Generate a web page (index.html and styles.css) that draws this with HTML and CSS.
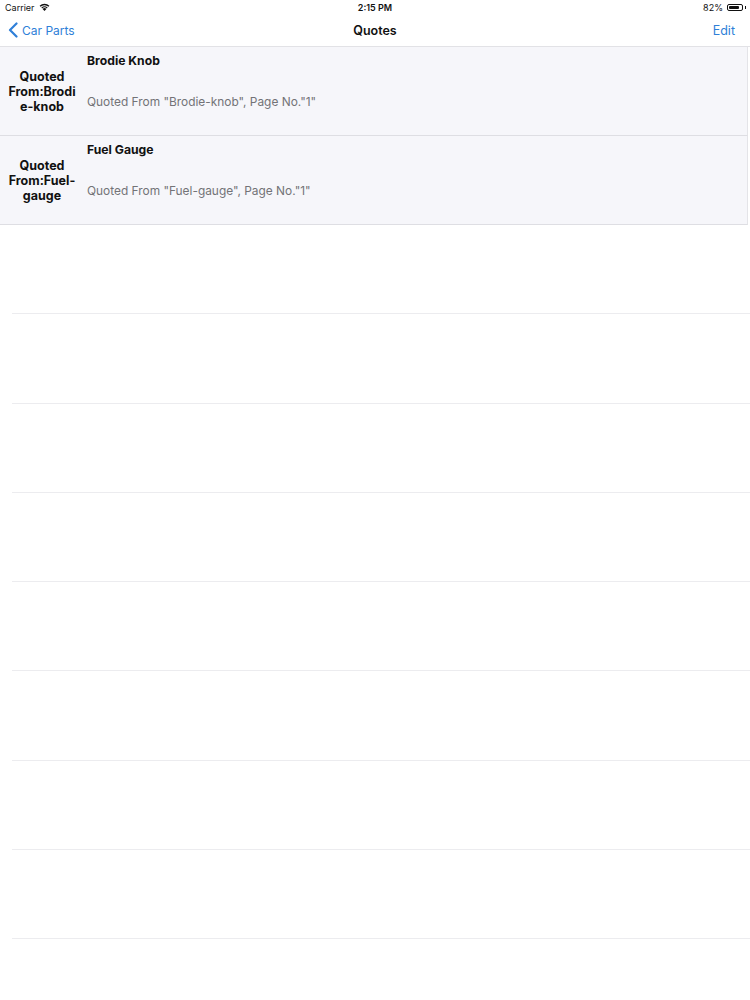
FILE: index.html
```html
<!DOCTYPE html>
<html>
<head>
<meta charset="utf-8">
<link rel="stylesheet" href="styles.css">
</head>
<body>
<div class="status">
  <div class="st-left">Carrier
    <svg class="wifi" width="11" height="8" viewBox="0 0 11 8"><path d="M5.5 8 L3.6 5.9 A2.8 2.8 0 0 1 7.4 5.9 Z" fill="#111"/><path d="M2.4 4.6 A4.5 4.5 0 0 1 8.6 4.6 L7.9 5.4 A3.5 3.5 0 0 0 3.1 5.4 Z" fill="#111"/><path d="M0.6 2.8 A7 7 0 0 1 10.4 2.8 L9.5 3.8 A5.8 5.8 0 0 0 1.5 3.8 Z" fill="#111"/></svg>
  </div>
  <div class="st-center">2:15 PM</div>
  <div class="st-right">82%
    <span class="battery"><span class="bat-fill"></span></span><span class="bat-tip"></span>
  </div>
</div>
<div class="nav">
  <div class="nav-left">
    <svg width="10" height="16" viewBox="0 0 10 16"><path d="M8.5 1.5 L2 8 L8.5 14.5" fill="none" stroke="#2f7fd8" stroke-width="2.2" stroke-linecap="round" stroke-linejoin="round"/></svg>
    <span>Car Parts</span>
  </div>
  <div class="nav-title">Quotes</div>
  <div class="nav-right">Edit</div>
</div>
<div class="list">
  <div class="cell">
    <div class="cell-label">Quoted From:Brodie-knob</div>
    <div class="cell-body">
      <div class="cell-title">Brodie Knob</div>
      <div class="cell-sub">Quoted From "Brodie-knob", Page No."1"</div>
    </div>
  </div>
  <div class="cell">
    <div class="cell-label">Quoted From:Fuel-gauge</div>
    <div class="cell-body">
      <div class="cell-title">Fuel Gauge</div>
      <div class="cell-sub">Quoted From "Fuel-gauge", Page No."1"</div>
    </div>
  </div>
  <div class="empty"></div>
  <div class="empty"></div>
  <div class="empty"></div>
  <div class="empty"></div>
  <div class="empty"></div>
  <div class="empty"></div>
  <div class="empty"></div>
  <div class="empty"></div>
</div>
</body>
</html>
```
FILE: styles.css
```css
html, body {
  margin: 0;
  padding: 0;
  background: #ffffff;
  font-family: Inter, "Liberation Sans", Arial, sans-serif;
  color: #111;
}
.status {
  height: 14px;
  display: flex;
  align-items: center;
  justify-content: space-between;
  padding: 0 4px 0 5px;
  font-size: 9px;
  position: relative;
}
.st-left {
  display: flex;
  align-items: center;
  gap: 4px;
}
.st-center {
  position: absolute;
  left: 0;
  right: 0;
  text-align: center;
  font-weight: 600;
  pointer-events: none;
}
.st-right {
  display: flex;
  align-items: center;
  gap: 2px;
}
.battery {
  display: inline-block;
  width: 16px;
  height: 7px;
  border: 1px solid #111;
  border-radius: 2px;
  padding: 1px;
  box-sizing: border-box;
  margin-left: 2px;
}
.bat-fill {
  display: block;
  width: 82%;
  height: 100%;
  background: #111;
  border-radius: 1px;
}
.bat-tip {
  display: inline-block;
  width: 1px;
  height: 3px;
  background: #111;
}
.nav {
  height: 32px;
  display: flex;
  align-items: center;
  justify-content: space-between;
  padding: 0 15px 0 8px;
  border-bottom: 1px solid #e2e2e6;
  position: relative;
  font-size: 12.5px;
}
.nav-left {
  display: flex;
  align-items: center;
  gap: 4px;
  color: #2f7fd8;
  font-size: 12px;
}
.nav-title {
  position: absolute;
  left: 0;
  right: 0;
  text-align: center;
  font-weight: 600;
  pointer-events: none;
}
.nav-right {
  color: #2f7fd8;
}
.cell {
  height: 88px;
  display: flex;
  background: #f6f6fa;
  border-bottom: 1px solid #dedee3;
  border-right: 1px solid #e4e4e8;
  margin-right: 2px;
}
.cell-label {
  width: 72px;
  margin-left: 6px;
  align-self: center;
  text-align: center;
  font-weight: 700;
  font-size: 12.5px;
  line-height: 15px;
  overflow-wrap: anywhere;
}
.cell-body {
  margin-left: 9px;
  display: flex;
  flex-direction: column;
  padding-top: 6px;
}
.cell-title {
  font-weight: 700;
  font-size: 12.2px;
  line-height: 15px;
}
.cell-sub {
  margin-top: 26px;
  font-size: 11.9px;
  line-height: 15px;
  color: #737377;
}
.empty {
  height: 88.3px;
  margin-left: 12px;
  border-bottom: 1px solid #ececef;
}
```
